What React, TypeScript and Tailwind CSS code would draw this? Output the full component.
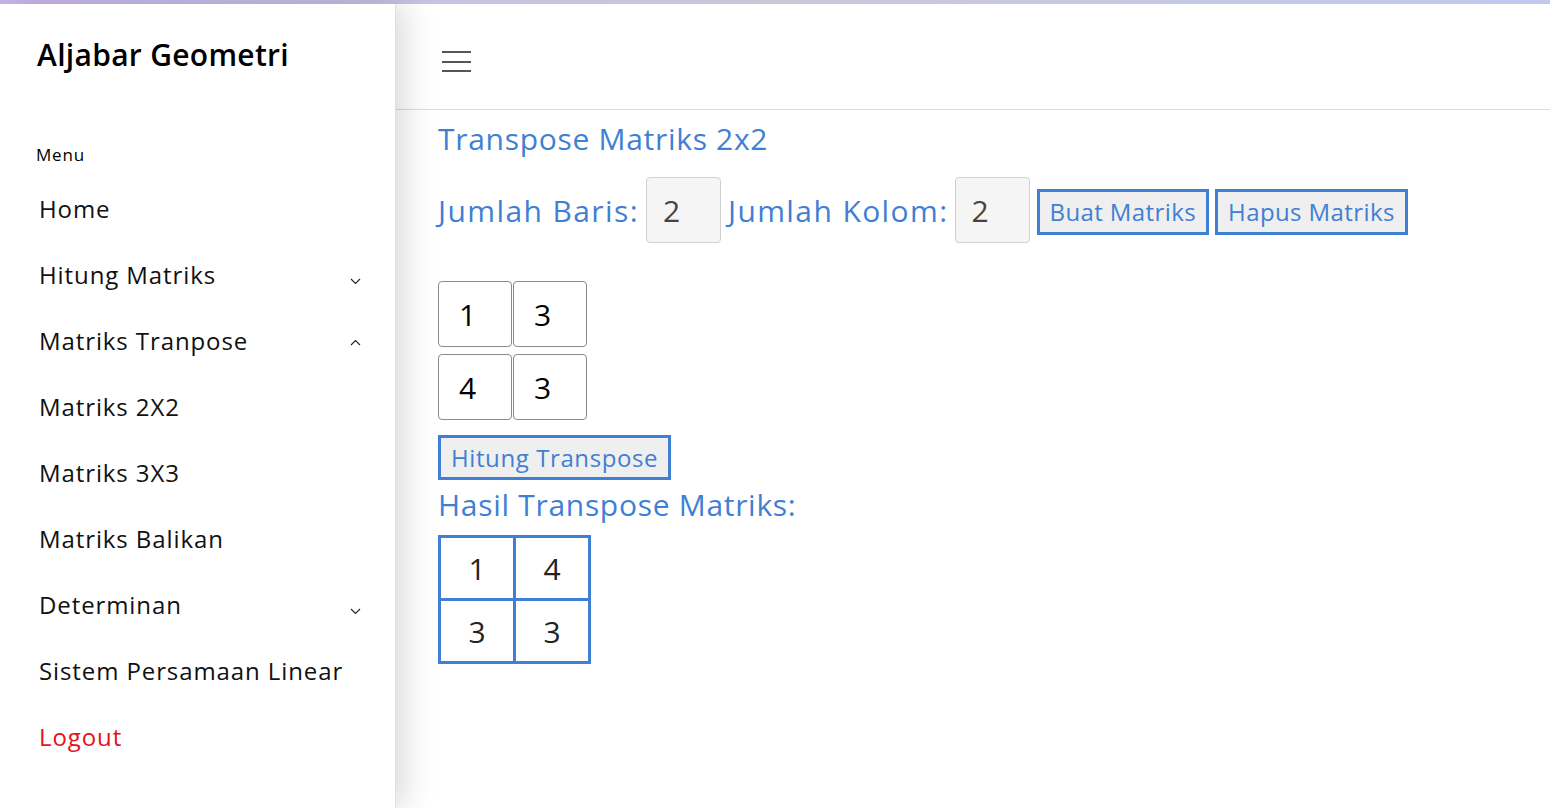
import { useState } from 'react';

const menu = [
  { label: 'Home' },
  { label: 'Hitung Matriks', chevron: 'down' },
  { label: 'Matriks Tranpose', chevron: 'up' },
  { label: 'Matriks 2X2' },
  { label: 'Matriks 3X3' },
  { label: 'Matriks Balikan' },
  { label: 'Determinan', chevron: 'down' },
  { label: 'Sistem Persamaan Linear' },
];

function Chevron({ dir }: { dir: string }) {
  return (
    <svg width="11" height="7" viewBox="0 0 11 7" className={dir === 'down' ? 'mt-[12px]' : 'mt-[2px]'}>
      <polyline points={dir === 'down' ? '1,1 5.5,5.5 10,1' : '1,6 5.5,1.5 10,6'} fill="none" stroke="#222" strokeWidth="1.1" />
    </svg>
  );
}

export default function App() {
  const [rows, setRows] = useState('2');
  const [cols, setCols] = useState('2');
  const [m, setM] = useState([['1', '3'], ['4', '3']]);
  const t = [[m[0][0], m[1][0]], [m[0][1], m[1][1]]];

  return (
    <div className="min-h-screen flex flex-col bg-white font-['Open_Sans',sans-serif]">
      <div className="h-[4px] bg-gradient-to-r from-[#c9b8f0] via-[#c8c8d8] to-[#c4c8f0]" />
      <div className="flex flex-1">
        {/* Sidebar */}
        <aside className="w-[396px] shrink-0 bg-white relative z-10 shadow-[6px_0_32px_rgba(0,0,0,0.17)] border-r border-[#e0e0e0]">
          <h1 className="pl-[37px] pt-[33px] text-[30px] font-semibold text-black tracking-[0.3px] leading-[36px]">Aljabar Geometri</h1>
          <p className="pl-[36px] mt-[71px] text-[17px] tracking-[0.8px] text-black leading-[22px]">Menu</p>
          <nav className="mt-[10px]">
            {menu.map(item => (
              <div key={item.label} className="h-[66px] pl-[39px] pr-[34px] flex items-center justify-between text-[24px] tracking-[0.9px] text-[#111]">
                <span>{item.label}</span>
                {item.chevron && <Chevron dir={item.chevron} />}
              </div>
            ))}
            <div className="h-[66px] pl-[39px] flex items-center text-[24px] tracking-[0.9px] text-[#e8101a]">Logout</div>
          </nav>
        </aside>

        {/* Main */}
        <main className="flex-1 bg-white">
          <header className="h-[106px] border-b border-[#dcdcdc] flex items-center pl-[46px]">
            <div className="flex flex-col gap-[7.5px] mt-[10px]">
              <span className="block w-[29px] h-[2px] bg-[#555]" />
              <span className="block w-[29px] h-[2px] bg-[#555]" />
              <span className="block w-[29px] h-[2px] bg-[#555]" />
            </div>
          </header>

          <div className="pl-[42px] text-[#3f80d4]">
            <h2 className="text-[30px] tracking-[0.7px] leading-[40px] mt-[9px]">Transpose Matriks 2x2</h2>

            <div className="flex items-center mt-[18px] text-[30px] tracking-[1.4px]">
              <span>Jumlah Baris:</span>
              <input value={rows} onChange={e => setRows(e.target.value)} className="ml-[7px] w-[75px] h-[66px] bg-[#f5f5f5] border border-[#d0d0d0] rounded-[4px] pl-[16px] text-[#444] text-[30px] tracking-normal outline-none" />
              <span className="ml-[7px]">Jumlah Kolom:</span>
              <input value={cols} onChange={e => setCols(e.target.value)} className="ml-[6px] w-[75px] h-[66px] bg-[#f5f5f5] border border-[#d0d0d0] rounded-[4px] pl-[16px] text-[#444] text-[30px] tracking-normal outline-none" />
              <button className="ml-[7px] h-[46px] px-[10px] border-[3px] border-[#3f80d4] bg-[#efefef] text-[24px] tracking-[0.4px] text-[#3f80d4] mt-[4px]">Buat Matriks</button>
              <button className="ml-[6px] h-[46px] px-[10px] border-[3px] border-[#3f80d4] bg-[#efefef] text-[24px] tracking-[0.4px] text-[#3f80d4] mt-[4px]">Hapus Matriks</button>
            </div>

            <div className="mt-[38px] flex flex-col gap-[7px]">
              {m.map((row, i) => (
                <div key={i} className="flex gap-[1px]">
                  {row.map((v, j) => (
                    <input
                      key={j}
                      value={v}
                      onChange={e => setM(m.map((r, ri) => r.map((c, ci) => (ri === i && ci === j ? e.target.value : c))))}
                      className="w-[74px] h-[66px] border border-[#8a8a8a] rounded-[4px] bg-white pl-[20px] text-[30px] text-black outline-none"
                    />
                  ))}
                </div>
              ))}
            </div>

            <button className="mt-[15px] h-[45px] px-[10px] border-[3px] border-[#3f80d4] bg-[#efefef] text-[24px] tracking-[0.6px] text-[#3f80d4] block">Hitung Transpose</button>

            <h3 className="text-[30px] tracking-[0.7px] leading-[40px] mt-[5px]">Hasil Transpose Matriks:</h3>

            <table className="mt-[10px] border-collapse border-[3px] border-[#3f80d4]">
              <tbody>
                {t.map((row, i) => (
                  <tr key={i}>
                    {row.map((v, j) => (
                      <td key={j} className="border-[3px] border-[#3f80d4] w-[75px] h-[63px] text-center text-[30px] text-[#222]">{v}</td>
                    ))}
                  </tr>
                ))}
              </tbody>
            </table>
          </div>
        </main>
      </div>
    </div>
  );
}
